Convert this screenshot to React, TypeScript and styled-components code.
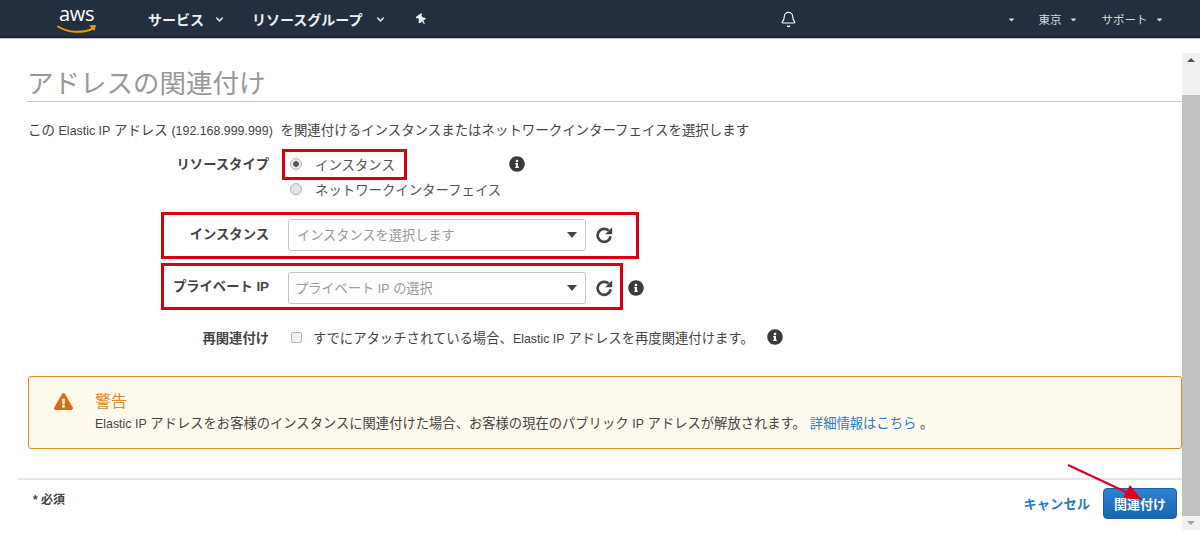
import { createGlobalStyle } from "styled-components";
import styled from "styled-components";
import { FaCaretDown, FaExclamationTriangle, FaInfoCircle, FaThumbtack } from "react-icons/fa";
import { Bell, ChevronDown } from "lucide-react";

const FONT = `"Liberation Sans", "Noto Sans CJK JP", sans-serif`;

const RefreshIcon = () => (
    <svg width="17" height="18" viewBox="0 0 17 18">
        <path d="M14.6 10.2a6.5 6.5 0 1 1-2-5.6" fill="none" stroke="currentColor" strokeWidth="2.7" />
        <path d="M16.2 1.2v7h-7z" fill="currentColor" />
    </svg>
);

export default function App() {
    return (
        <Page>
            <GlobalStyle />
            <Header>
                <AwsLogo>
                    <AwsWord>aws</AwsWord>
                    <AwsSmile viewBox="0 0 40 10">
                        <path d="M1 2.5C11 9 26 9.5 36 4.5" fill="none" stroke="#f79400" strokeWidth="2" strokeLinecap="round" />
                        <path d="M32 1.5L39 1L37.5 7Z" fill="#f79400" />
                    </AwsSmile>
                </AwsLogo>
                <NavItem $left={52}>サービス</NavItem>
                <NavChevron $left={10}><ChevronDown size={11} strokeWidth={3.4} /></NavChevron>
                <NavItem $left={27}>リソースグループ</NavItem>
                <NavChevron $left={13}><ChevronDown size={11} strokeWidth={3.4} /></NavChevron>
                <PinIcon><FaThumbtack size={11} /></PinIcon>
                <BellIcon><Bell size={17} strokeWidth={1.6} /></BellIcon>
                <SmallCaret $left={210}><FaCaretDown size={9} /></SmallCaret>
                <AccountItem $left={22}>東京</AccountItem>
                <SmallCaret $left={8}><FaCaretDown size={9} /></SmallCaret>
                <AccountItem $left={23}>サポート</AccountItem>
                <SmallCaret $left={8}><FaCaretDown size={9} /></SmallCaret>
            </Header>
            <Main>
                <Content>
                    <TitleBlock>
                        <Title>アドレスの関連付け</Title>
                    </TitleBlock>
                    <Description>
                        この <Latin>Elastic IP</Latin> アドレス <Numbers>(192.168.999.999)</Numbers> を関連付けるインスタンスまたはネットワークインターフェイスを選択します
                    </Description>
                    <FormRow $top={13} $height={50}>
                        <TopLabel>リソースタイプ</TopLabel>
                        <RadioColumn>
                            <RadioLine>
                                <Radio $checked />
                                <OptionText>インスタンス</OptionText>
                                <RadioInfo><FaInfoCircle size={16} /></RadioInfo>
                            </RadioLine>
                            <RadioLine>
                                <Radio />
                                <OptionText>ネットワークインターフェイス</OptionText>
                            </RadioLine>
                        </RadioColumn>
                    </FormRow>
                    <FormRow $top={18} $height={32}>
                        <Label $lift={4}>インスタンス</Label>
                        <SelectBox $indent={8}>
                            <Placeholder>インスタンスを選択します</Placeholder>
                            <SelectCaret />
                        </SelectBox>
                        <RefreshButton><RefreshIcon /></RefreshButton>
                    </FormRow>
                    <FormRow $top={21} $height={32}>
                        <Label $lift={6}>プライベート IP</Label>
                        <SelectBox $indent={6}>
                            <Placeholder>プライベート <Latin>IP</Latin> の選択</Placeholder>
                            <SelectCaret />
                        </SelectBox>
                        <RefreshButton><RefreshIcon /></RefreshButton>
                        <RowInfo><FaInfoCircle size={16} /></RowInfo>
                    </FormRow>
                    <FormRow $top={23} $height={20}>
                        <Label>再関連付け</Label>
                        <Checkbox />
                        <CheckText>すでにアタッチされている場合、<Latin>Elastic IP</Latin> アドレスを再度関連付けます。</CheckText>
                        <CheckInfo><FaInfoCircle size={16} /></CheckInfo>
                    </FormRow>
                    <WarningBox>
                        <WarningIcon><FaExclamationTriangle size={19} /></WarningIcon>
                        <div>
                            <WarningTitle>警告</WarningTitle>
                            <WarningText>
                                <Latin>Elastic IP</Latin> アドレスをお客様のインスタンスに関連付けた場合、お客様の現在のパブリック <Latin>IP</Latin> アドレスが解放されます。
                                <WarningLink>詳細情報はこちら</WarningLink> 。
                            </WarningText>
                        </div>
                    </WarningBox>
                    <Footer>
                        <Required>* 必須</Required>
                        <CancelLink>キャンセル</CancelLink>
                        <PrimaryButton>関連付け</PrimaryButton>
                    </Footer>
                </Content>
                <Scrollbar>
                    <ScrollArrow $up />
                    <ScrollThumb />
                    <ScrollArrow />
                </Scrollbar>
            </Main>
            <RedBox $x={282} $y={149} $w={125} $h={31} />
            <RedBox $x={161} $y={212} $w={478} $h={47} />
            <RedBox $x={161} $y={263} $w={462} $h={47} />
            <ArrowMark viewBox="0 0 90 50">
                <path d="M2 2L62 30" stroke="#e0001b" strokeWidth="2.2" fill="none" />
                <path d="M76 37L57 35L64 22Z" fill="#e0001b" />
            </ArrowMark>
        </Page>
    );
}

const GlobalStyle = createGlobalStyle`
    html, body {
        margin: 0;
        padding: 0;
        background: #ffffff;
    }
    * {
        box-sizing: border-box;
    }
`;

const Page = styled.div`
    position: relative;
    width: 1200px;
    height: 537px;
    overflow: hidden;
    font-family: ${FONT};
    color: #444444;
`;

const Latin = styled.span`
    font-size: 12.4px;
`;

const Numbers = styled(Latin)`
    margin-right: 4px;
`;

const Header = styled.header`
    display: flex;
    align-items: center;
    height: 39px;
    padding-left: 57px;
    background: #232f3e;
    border-bottom: 1px solid #b6bcc2;
    box-shadow: inset 0 -2px 0 #1b2531;
`;

const AwsLogo = styled.div`
    position: relative;
    width: 39px;
    height: 30px;
    flex-shrink: 0;
`;

const AwsWord = styled.span`
    display: block;
    font-family: "Open Sans", sans-serif;
    font-size: 20px;
    line-height: 20px;
    letter-spacing: -0.3px;
    color: #ffffff;
    text-align: center;
`;

const AwsSmile = styled.svg`
    position: absolute;
    left: 0;
    top: 20px;
    width: 40px;
    height: 10px;
`;

const NavItem = styled.span<{ $left: number }>`
    margin-left: ${(p) => p.$left}px;
    font-size: 14px;
    font-weight: 700;
    color: #eef0f2;
    white-space: nowrap;
`;

const NavChevron = styled.span<{ $left: number }>`
    display: flex;
    margin-left: ${(p) => p.$left}px;
    color: #d5dbdb;
`;

const PinIcon = styled.span`
    display: flex;
    margin-left: 30px;
    color: #eef0f2;
    transform: rotate(-35deg);
`;

const BellIcon = styled.span`
    display: flex;
    margin-left: 353px;
    color: #ffffff;
`;

const SmallCaret = styled.span<{ $left: number }>`
    display: flex;
    margin-left: ${(p) => p.$left}px;
    color: #d5dbdb;
`;

const AccountItem = styled.span<{ $left: number }>`
    margin-left: ${(p) => p.$left}px;
    font-size: 11.5px;
    color: #d5dbdb;
    white-space: nowrap;
`;

const Main = styled.main`
    display: flex;
    height: 498px;
`;

const Content = styled.div`
    display: flex;
    flex-direction: column;
    width: 1182px;
    flex-shrink: 0;
`;

const TitleBlock = styled.div`
    height: 63px;
    margin-left: 27px;
    padding-top: 29px;
    border-bottom: 1px solid #c8c8c8;
`;

const Title = styled.h1`
    margin: 0;
    font-size: 26.5px;
    line-height: 33px;
    font-weight: 400;
    color: #999999;
`;

const Description = styled.p`
    margin: 21px 0 0 28px;
    font-size: 13.45px;
    line-height: 16px;
    color: #444444;
    white-space: nowrap;
`;

const FormRow = styled.div<{ $top: number; $height: number }>`
    display: flex;
    align-items: center;
    height: ${(p) => p.$height}px;
    margin-top: ${(p) => p.$top}px;
`;

const Label = styled.label<{ $lift?: number }>`
    width: 269px;
    flex-shrink: 0;
    padding-bottom: ${(p) => p.$lift ?? 0}px;
    font-size: 13.3px;
    font-weight: 700;
    color: #444444;
    text-align: right;
    white-space: nowrap;
`;

const TopLabel = styled(Label)`
    align-self: flex-start;
    margin-top: 3px;
    line-height: 20px;
`;

const RadioColumn = styled.div`
    display: flex;
    flex-direction: column;
    gap: 5px;
`;

const RadioLine = styled.div`
    display: flex;
    align-items: center;
    height: 20px;
    padding-left: 21px;
`;

const Radio = styled.span<{ $checked?: boolean }>`
    width: 12px;
    height: 12px;
    border-radius: 50%;
    border: 1px solid #b4b4b4;
    background: ${(p) =>
        p.$checked ? "radial-gradient(circle, #555555 0 2.5px, #e8e8e8 3.2px)" : "#e4e4e4"};
`;

const OptionText = styled.span`
    margin-left: 13px;
    font-size: 13.4px;
    color: #555555;
    white-space: nowrap;
`;

const RadioInfo = styled.span`
    display: flex;
    margin-left: 114px;
    color: #3b3b3b;
`;

const SelectBox = styled.div<{ $indent: number }>`
    display: flex;
    align-items: center;
    justify-content: space-between;
    width: 298px;
    height: 32px;
    margin-left: 19px;
    padding: 0 8px 0 ${(p) => p.$indent}px;
    border: 1px solid #c4c4c4;
    border-radius: 3px;
    background: #ffffff;
`;

const Placeholder = styled.span`
    padding-bottom: 2px;
    font-size: 13.2px;
    color: #999999;
    white-space: nowrap;
`;

const SelectCaret = styled.span`
    width: 0;
    height: 0;
    border-left: 5px solid transparent;
    border-right: 5px solid transparent;
    border-top: 6px solid #444444;
`;

const RefreshButton = styled.span`
    display: flex;
    margin-left: 10px;
    color: #444444;
`;

const RowInfo = styled.span`
    display: flex;
    margin-left: 15px;
    color: #3b3b3b;
`;

const Checkbox = styled.span`
    width: 11px;
    height: 11px;
    margin-left: 22px;
    border: 1px solid #b4b4b4;
    border-radius: 2px;
    background: #f2f2f2;
`;

const CheckText = styled.span`
    margin-left: 11px;
    font-size: 13.35px;
    color: #444444;
    white-space: nowrap;
`;

const CheckInfo = styled.span`
    display: flex;
    margin-left: 13px;
    color: #3b3b3b;
`;

const WarningBox = styled.section`
    display: flex;
    width: 1154px;
    height: 73px;
    margin: 29px 0 0 28px;
    padding: 15px 0 0 25px;
    border: 1px solid #e08a2c;
    border-radius: 3px;
    background: #fffaed;
`;

const WarningIcon = styled.span`
    display: flex;
    width: 41px;
    height: 20px;
    color: #dd6b10;
`;

const WarningTitle = styled.div`
    font-size: 16px;
    line-height: 20px;
    color: #dd8a2e;
`;

const WarningText = styled.div`
    margin-top: 3px;
    font-size: 13.3px;
    line-height: 18px;
    color: #444444;
    white-space: nowrap;
`;

const WarningLink = styled.a`
    margin-left: 4px;
    color: #2a7ac7;
`;

const Footer = styled.footer`
    display: flex;
    align-items: flex-start;
    height: 60px;
    margin: 29px 0 0 18px;
    border-top: 2px solid #e6e6e6;
`;

const Required = styled.span`
    margin: 10px 0 0 15px;
    font-size: 12px;
    font-weight: 700;
    color: #444444;
`;

const CancelLink = styled.a`
    margin: 14px 0 0 auto;
    font-size: 13.3px;
    font-weight: 700;
    color: #2a7ac7;
`;

const PrimaryButton = styled.button`
    width: 74px;
    height: 31px;
    margin: 8px 5px 0 13px;
    padding: 0;
    border: 1px solid #1a5fa8;
    border-radius: 4px;
    background: linear-gradient(#2e83d0, #1666b3);
    font-family: ${FONT};
    font-size: 13px;
    font-weight: 700;
    color: #ffffff;
`;

const Scrollbar = styled.div`
    display: flex;
    flex-direction: column;
    width: 18px;
    height: 477px;
    margin-top: 14px;
    background: #f1f1f1;
`;

const ScrollArrow = styled.span<{ $up?: boolean }>`
    width: 0;
    height: 0;
    margin: 5px auto;
    border-left: 4px solid transparent;
    border-right: 4px solid transparent;
    ${(p) => (p.$up ? "border-bottom: 4px solid #505050;" : "border-top: 4px solid #a3a3a3;")}
`;

const ScrollThumb = styled.div`
    flex: 1;
    margin-top: 28px;
    background: #c1c1c1;
`;

const RedBox = styled.div<{ $x: number; $y: number; $w: number; $h: number }>`
    position: absolute;
    left: ${(p) => p.$x}px;
    top: ${(p) => p.$y}px;
    width: ${(p) => p.$w}px;
    height: ${(p) => p.$h}px;
    border: 3px solid #d8000f;
`;

const ArrowMark = styled.svg`
    position: absolute;
    left: 1066px;
    top: 463px;
    width: 90px;
    height: 50px;
`;
